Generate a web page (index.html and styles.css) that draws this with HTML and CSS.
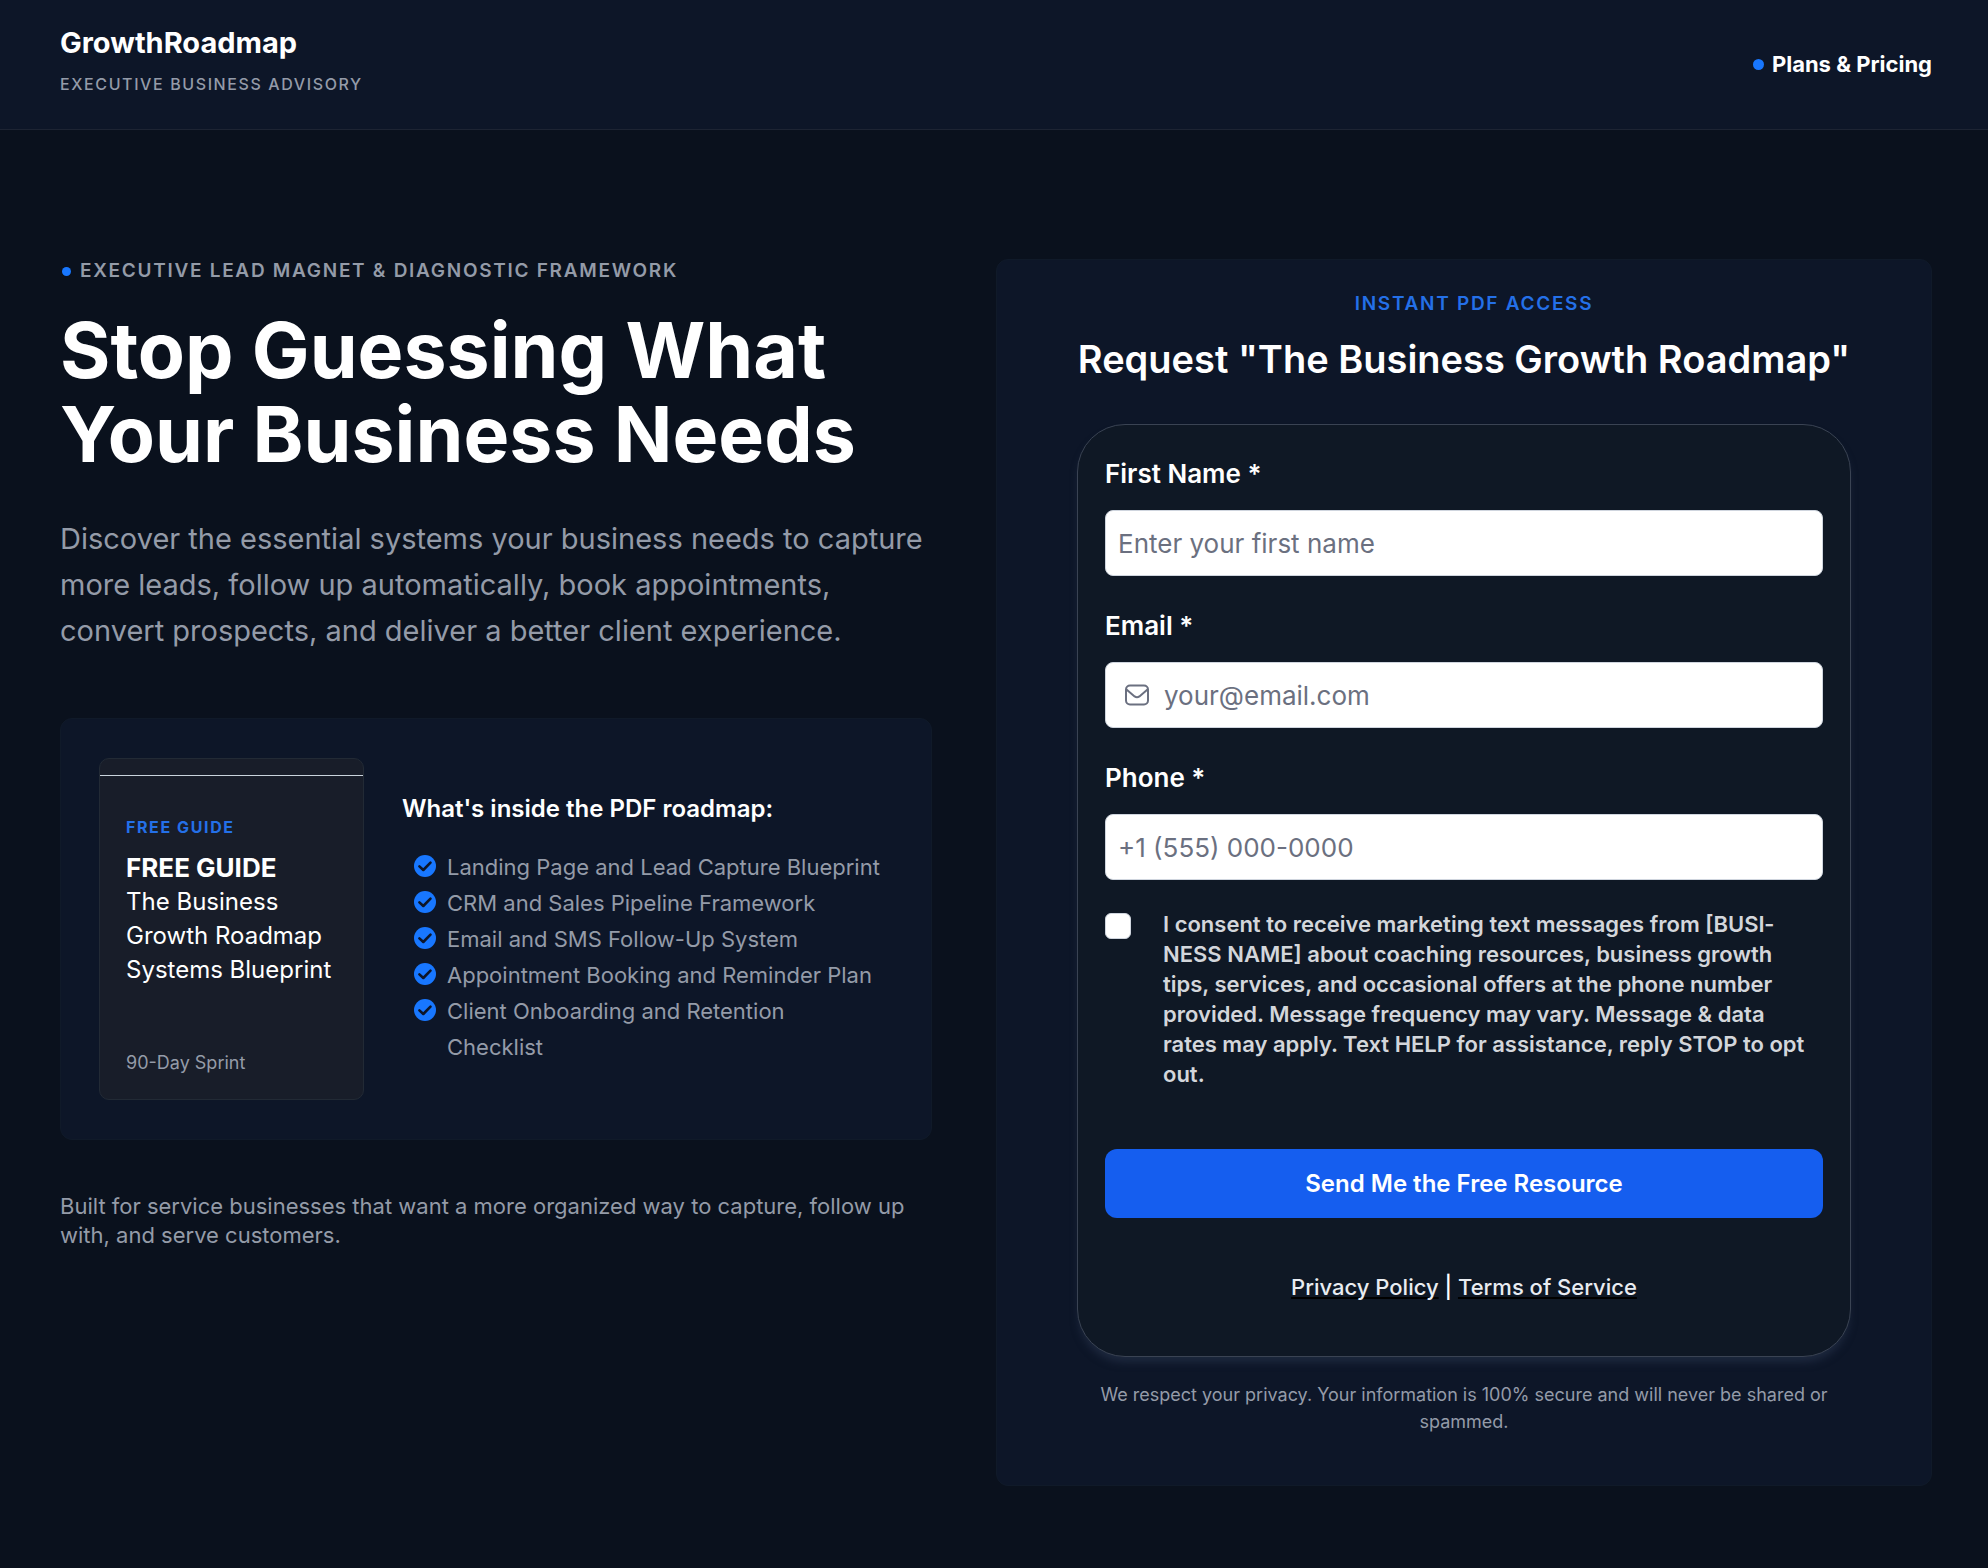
FILE: index.html
```html
<!DOCTYPE html>
<html lang="en">
<head>
<meta charset="utf-8">
<meta name="viewport" content="width=device-width, initial-scale=1">
<title>GrowthRoadmap</title>
<link rel="stylesheet" href="styles.css">
</head>
<body>
<svg class="sprite" aria-hidden="true">
  <symbol id="check" viewBox="0 0 22 22">
    <circle cx="11" cy="11" r="11" fill="#1877ff"/>
    <path d="M5.4 11.4 9.3 15l7.2-7.4" fill="none" stroke="#0d1629" stroke-width="2.6" stroke-linecap="round" stroke-linejoin="round"/>
  </symbol>
</svg>
<header class="site-header">
  <div class="brand">
    <div class="brand-name">GrowthRoadmap</div>
    <div class="brand-tag">EXECUTIVE BUSINESS ADVISORY</div>
  </div>
  <a class="nav-link" href="#pricing"><span class="dot"></span>Plans &amp; Pricing</a>
</header>
<main class="hero">
  <section class="intro">
    <p class="eyebrow"><span class="dot dot-small"></span>EXECUTIVE LEAD MAGNET &amp; DIAGNOSTIC FRAMEWORK</p>
    <h1>Stop Guessing What Your Business Needs</h1>
    <p class="lead">Discover the essential systems your business needs to capture more leads, follow up automatically, book appointments, convert prospects, and deliver a better client experience.</p>
    <div class="guide-card">
      <div class="cover">
        <p class="cover-label">FREE GUIDE</p>
        <p class="cover-title">FREE GUIDE</p>
        <p class="cover-text">The Business Growth Roadmap Systems Blueprint</p>
        <p class="cover-foot">90-Day Sprint</p>
      </div>
      <div class="inside">
        <h2>What's inside the PDF roadmap:</h2>
        <ul class="checklist">
          <li><svg class="check"><use href="#check"/></svg>Landing Page and Lead Capture Blueprint</li>
          <li><svg class="check"><use href="#check"/></svg>CRM and Sales Pipeline Framework</li>
          <li><svg class="check"><use href="#check"/></svg>Email and SMS Follow-Up System</li>
          <li><svg class="check"><use href="#check"/></svg>Appointment Booking and Reminder Plan</li>
          <li><svg class="check"><use href="#check"/></svg>Client Onboarding and Retention Checklist</li>
        </ul>
      </div>
    </div>
    <p class="audience">Built for service businesses that want a more organized way to capture, follow up with, and serve customers.</p>
  </section>
  <section class="request">
    <p class="access">INSTANT PDF ACCESS</p>
    <h2 class="request-title">Request "The Business Growth Roadmap"</h2>
    <form class="panel">
      <div class="field">
        <label for="first-name">First Name *</label>
        <input id="first-name" type="text" placeholder="Enter your first name">
      </div>
      <div class="field">
        <label for="email">Email *</label>
        <div class="with-icon">
          <svg class="mail" viewBox="0 0 24 24" fill="none" stroke="#6b7080" stroke-width="2" stroke-linecap="round" stroke-linejoin="round"><rect x="1" y="2.500" width="22" height="19" rx="4"/><path d="M1.500 6.500 9.600 13.400a4 4 0 0 0 4.800 0L22.500 6.500"/></svg>
          <input id="email" type="email" placeholder="your@email.com">
        </div>
      </div>
      <div class="field">
        <label for="phone">Phone *</label>
        <input id="phone" type="tel" placeholder="+1 (555) 000-0000">
      </div>
      <div class="consent">
        <input id="consent" type="checkbox">
        <label for="consent">I consent to receive marketing text messages from [BUSI&shy;NESS NAME] about coaching resources, business growth tips, services, and occasional offers at the phone number provided. Message frequency may vary. Message &amp; data rates may apply. Text HELP for assistance, reply STOP to opt out.</label>
      </div>
      <button class="submit" type="submit">Send Me the Free Resource</button>
      <p class="legal"><a href="#privacy">Privacy Policy</a> | <a href="#terms">Terms of Service</a></p>
    </form>
    <p class="privacy">We respect your privacy. Your information is 100% secure and will never be shared or spammed.</p>
  </section>
</main>
</body>
</html>
```
FILE: styles.css
```css
* {
  box-sizing: border-box;
}

body {
  margin: 0;
  min-height: 100vh;
  background: #0a111d;
  color: #fff;
  font-family: Inter, "Liberation Sans", sans-serif;
}

h1, h2, p, ul {
  margin: 0;
  padding: 0;
}

.sprite {
  display: none;
}

.site-header {
  display: flex;
  justify-content: space-between;
  align-items: center;
  padding: 24px 56px 33px 60px;
  background: #0d1628;
  border-bottom: 1px solid #1d2433;
}

.brand-name {
  font-size: 29px;
  line-height: 38px;
  font-weight: 700;
}

.brand-tag {
  margin-top: 10px;
  font-size: 16px;
  line-height: 24px;
  font-weight: 500;
  letter-spacing: 0.1em;
  color: #949ba8;
}

.nav-link {
  display: flex;
  align-items: center;
  gap: 8px;
  padding-top: 8px;
  color: #fff;
  font-size: 22px;
  line-height: 28px;
  font-weight: 700;
  text-decoration: none;
}

.dot {
  flex: none;
  width: 11px;
  height: 11px;
  border-radius: 50%;
  background: #1877ff;
}

.dot-small {
  width: 9px;
  height: 9px;
}

.hero {
  display: grid;
  grid-template-columns: 109fr 117fr;
  gap: 64px;
  align-items: start;
  padding: 129px 56px 80px 60px;
}

.eyebrow {
  display: flex;
  align-items: center;
  gap: 9px;
  padding-left: 2px;
  font-size: 19px;
  line-height: 24px;
  font-weight: 600;
  letter-spacing: 0.09em;
  color: #949ba8;
}

h1 {
  margin-top: 25px;
  font-size: 77px;
  line-height: 84px;
  font-weight: 700;
}

.lead {
  margin-top: 40px;
  font-size: 29px;
  line-height: 46px;
  color: #949ba8;
}

.guide-card {
  display: flex;
  gap: 38px;
  margin-top: 64px;
  padding: 39px 38px;
  background: #0d1628;
  border: 1px solid #101a29;
  border-radius: 12px;
}

.cover {
  flex: none;
  display: flex;
  flex-direction: column;
  width: 265px;
  min-height: 342px;
  padding: 56px 26px 24px;
  border: 1px solid #222a35;
  border-radius: 10px;
  background: linear-gradient(#c9d3dc, #c9d3dc) 0 16px / 100% 1px no-repeat, #181d29;
}

.cover-label {
  font-size: 16px;
  line-height: 24px;
  font-weight: 700;
  letter-spacing: 0.1em;
  color: #2470e8;
}

.cover-title {
  margin-top: 12px;
  font-size: 26px;
  line-height: 34px;
  font-weight: 700;
}

.cover-text {
  font-size: 24px;
  line-height: 34px;
}

.cover-foot {
  margin-top: auto;
  font-size: 18px;
  line-height: 24px;
  color: #949ba8;
}

.inside {
  flex: 1;
  padding-top: 35px;
}

.inside h2 {
  font-size: 24px;
  line-height: 32px;
  font-weight: 600;
}

.checklist {
  margin-top: 24px;
  padding: 0 8px 0 12px;
  list-style: none;
  font-size: 22px;
  line-height: 36px;
  color: #949ba8;
}

.checklist li {
  display: flex;
  gap: 11px;
}

.check {
  flex: none;
  width: 22px;
  height: 22px;
  margin-top: 6px;
}

.audience {
  margin-top: 52px;
  font-size: 22px;
  line-height: 29px;
  color: #949ba8;
}

.request {
  padding: 32px 80px 50px;
  background: #0d1628;
  border: 1px solid #101a29;
  border-radius: 12px;
  text-align: center;
}

.access {
  padding-left: 20px;
  font-size: 19px;
  line-height: 24px;
  font-weight: 600;
  letter-spacing: 0.09em;
  color: #2470e8;
}

.request-title {
  margin: 19px -20px 0;
  font-size: 38px;
  line-height: 48px;
  font-weight: 600;
}

.panel {
  margin-top: 41px;
  padding: 32px 27px 52px;
  background: #0f1825;
  border: 1px solid #3a4353;
  border-radius: 48px;
  box-shadow: 0 7px 8px -2px #1e293f;
  text-align: left;
}

.field + .field {
  margin-top: 33px;
}

.field label {
  display: block;
  margin-bottom: 19px;
  font-size: 26px;
  line-height: 34px;
  font-weight: 600;
}

.field input {
  display: block;
  width: 100%;
  height: 66px;
  padding: 0 12px;
  border: 1px solid #cfd5de;
  border-radius: 8px;
  background: #fff;
  color: #111827;
  font: inherit;
  font-size: 26px;
}

.field input::placeholder {
  color: #6b7080;
  opacity: 1;
}

.with-icon {
  position: relative;
}

.field .with-icon input {
  padding-left: 58px;
}

.mail {
  position: absolute;
  top: 21px;
  left: 20px;
  width: 24px;
  height: 24px;
}

.consent {
  display: flex;
  gap: 32px;
  margin-top: 29px;
  padding-right: 8px;
  font-size: 22px;
  line-height: 30px;
  font-weight: 600;
  color: #d3d6db;
}

.consent input {
  flex: none;
  appearance: none;
  width: 26px;
  height: 26px;
  margin: 4px 0 0;
  border: 1px solid #cfd5de;
  border-radius: 6px;
  background: #fff;
}

.submit {
  display: block;
  width: 100%;
  margin-top: 60px;
  padding: 0;
  border: 0;
  border-radius: 12px;
  background: #155eef;
  color: #fff;
  font: inherit;
  font-size: 24px;
  line-height: 69px;
  font-weight: 600;
}

.legal {
  margin-top: 52px;
  font-size: 22px;
  line-height: 34px;
  font-weight: 500;
  text-align: center;
}

.legal a {
  color: #e9ecf1;
  text-decoration: underline 2px #000;
  text-decoration-skip-ink: none;
  text-underline-offset: 2px;
}

.privacy {
  margin-top: 24px;
  font-size: 18px;
  line-height: 27px;
  color: #949ba8;
}
```
